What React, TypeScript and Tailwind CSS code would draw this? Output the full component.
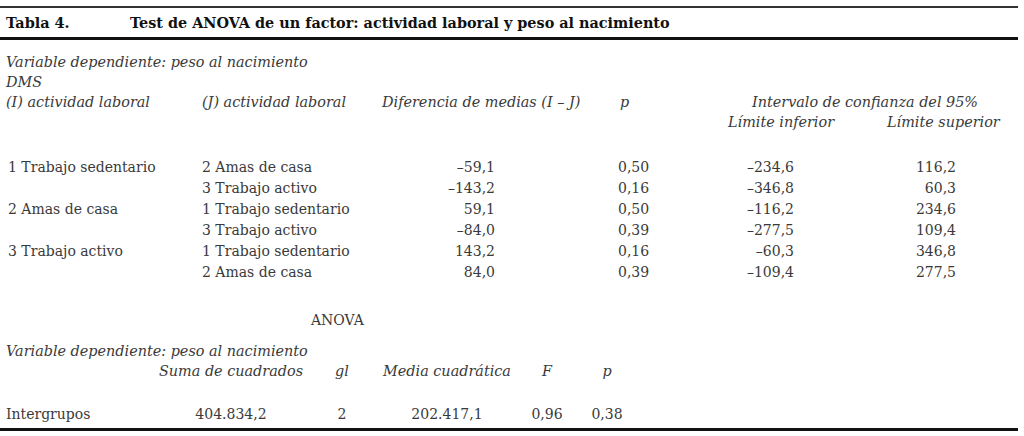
const rows = [
  { i: "1 Trabajo sedentario", j: "2 Amas de casa", diff: "–59,1", p: "0,50", lo: "–234,6", hi: "116,2" },
  { i: "", j: "3 Trabajo activo", diff: "–143,2", p: "0,16", lo: "–346,8", hi: "60,3" },
  { i: "2 Amas de casa", j: "1 Trabajo sedentario", diff: "59,1", p: "0,50", lo: "–116,2", hi: "234,6" },
  { i: "", j: "3 Trabajo activo", diff: "–84,0", p: "0,39", lo: "–277,5", hi: "109,4" },
  { i: "3 Trabajo activo", j: "1 Trabajo sedentario", diff: "143,2", p: "0,16", lo: "–60,3", hi: "346,8" },
  { i: "", j: "2 Amas de casa", diff: "84,0", p: "0,39", lo: "–109,4", hi: "277,5" },
];

export default function App() {
  return (
    <div className="w-[1024px] h-[436px] bg-white text-[#3a3a3a] text-[14px] font-['DejaVu_Serif',serif] overflow-hidden">
      <div className="w-[1018px] pt-[6px]">
        <div className="border-t-2 border-[#333]" />
        <div className="flex h-[29px] items-center px-[6px] font-bold text-[14.4px] text-[#111]">
          <span className="w-[124px]">Tabla 4.</span>
          <span>Test de ANOVA de un factor: actividad laboral y peso al nacimiento</span>
        </div>
        <div className="border-t-[3px] border-[#111]" />

        {/* comparaciones múltiples */}
        <div className="mt-[13px] px-[6px] italic text-[14.4px]">
          <div className="flex h-[20px] items-center">Variable dependiente: peso al nacimiento</div>
          <div className="flex h-[20px] items-center">DMS</div>
          <div className="flex h-[20px] items-center whitespace-nowrap">
            <span className="w-[196px]">(I) actividad laboral</span>
            <span className="w-[180px]">(J) actividad laboral</span>
            <span className="w-[238px]">Diferencia de medias (I – J)</span>
            <span className="w-[132px]">p</span>
            <span>Intervalo de confianza del 95%</span>
          </div>
          <div className="flex h-[20px] items-center whitespace-nowrap">
            <span className="w-[722px]" />
            <span className="w-[159px]">Límite inferior</span>
            <span>Límite superior</span>
          </div>
        </div>

        <div className="mt-[24px] px-[6px]">
          {rows.map((r, k) => (
            <div key={k} className="flex h-[21px] items-center whitespace-nowrap">
              <span className="w-[196px] pl-[2px]">{r.i}</span>
              <span className="w-[178px]">{r.j}</span>
              <span className="w-[115px] text-right">{r.diff}</span>
              <span className="w-[123px]" />
              <span className="w-[100px]">{r.p}</span>
              <span className="w-[76px] text-right">{r.lo}</span>
              <span className="w-[162px] text-right">{r.hi}</span>
            </div>
          ))}
        </div>

        {/* ANOVA */}
        <div className="mt-[27px] flex h-[20px] items-center pl-[311px]">ANOVA</div>
        <div className="mt-[12px] px-[6px]">
          <div className="flex h-[20px] items-center italic text-[14.4px]">Variable dependiente: peso al nacimiento</div>
          <div className="flex h-[20px] items-center italic text-[14.4px] whitespace-nowrap">
            <span className="w-[146px]" />
            <span className="w-[158px] text-center">Suma de cuadrados</span>
            <span className="w-[64px] text-center">gl</span>
            <span className="w-[146px] text-center">Media cuadrática</span>
            <span className="w-[54px] text-center">F</span>
            <span className="w-[66px] text-center">p</span>
          </div>
          <div className="mt-[22px] flex h-[20px] items-center whitespace-nowrap">
            <span className="w-[146px]">Intergrupos</span>
            <span className="w-[158px] text-center">404.834,2</span>
            <span className="w-[64px] text-center">2</span>
            <span className="w-[146px] text-center">202.417,1</span>
            <span className="w-[54px] text-center">0,96</span>
            <span className="w-[66px] text-center">0,38</span>
          </div>
        </div>
        <div className="mt-[4px] border-t-[3px] border-[#111]" />
      </div>
    </div>
  );
}
